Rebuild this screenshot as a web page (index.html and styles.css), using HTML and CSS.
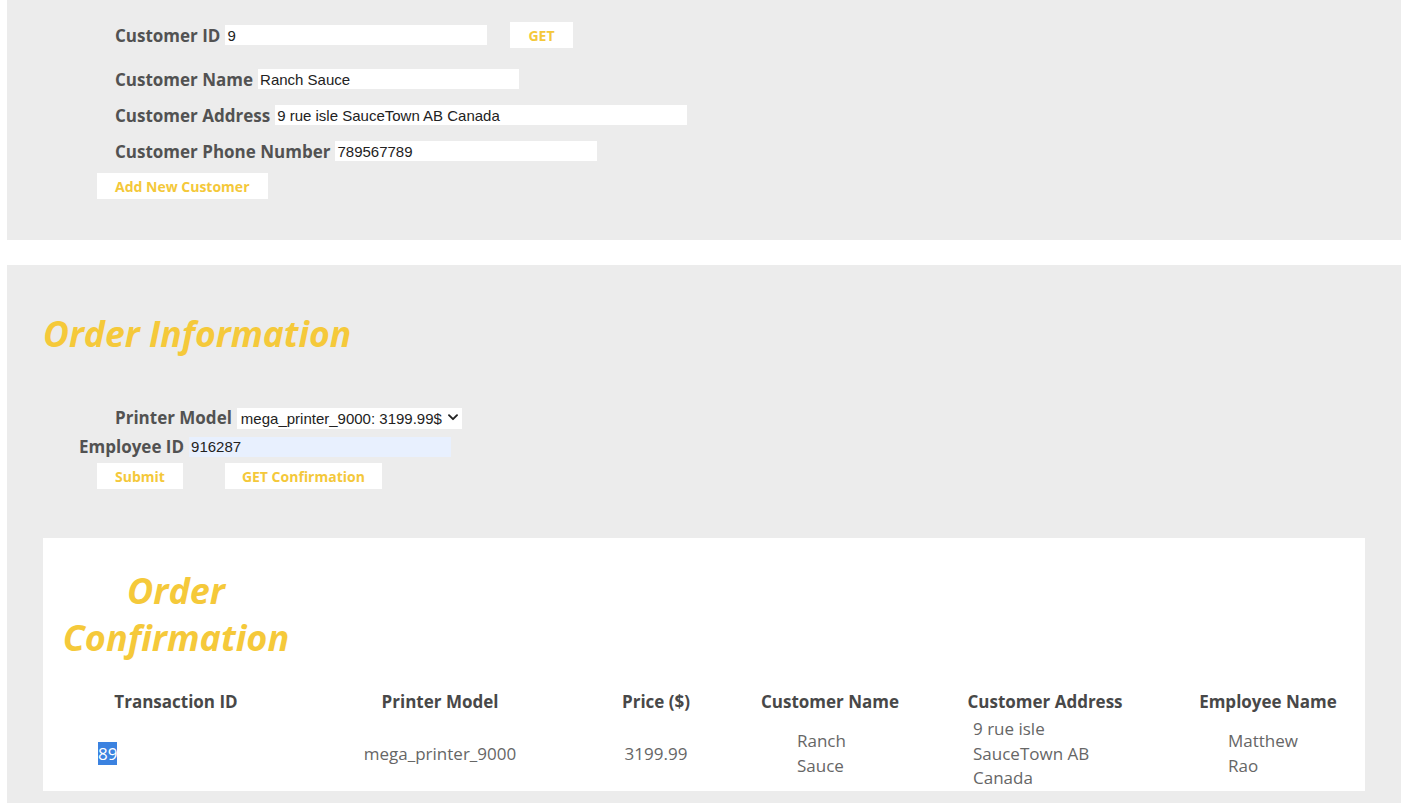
FILE: index.html
```html
<!DOCTYPE html>
<html lang="en">
<head>
<meta charset="utf-8">
<title>Printer Orders</title>
<link rel="stylesheet" href="styles.css">
</head>
<body>
<div class="page">
  <section class="panel panel-customer">
    <div class="row row-id">
      <label class="label">Customer ID</label>
      <input class="field" type="text" value="9">
      <button class="btn btn-get" type="button">GET</button>
    </div>
    <div class="row">
      <label class="label">Customer Name</label>
      <input class="field field-name" type="text" value="Ranch Sauce">
    </div>
    <div class="row">
      <label class="label">Customer Address</label>
      <input class="field field-wide" type="text" value="9 rue isle SauceTown AB Canada">
    </div>
    <div class="row">
      <label class="label">Customer Phone Number</label>
      <input class="field" type="text" value="789567789">
    </div>
    <button class="btn btn-add" type="button">Add New Customer</button>
  </section>

  <section class="panel panel-order">
    <h1 class="title">Order Information</h1>
    <div class="line line-printer">
      <label class="label">Printer Model</label>
      <span class="select-wrap">
        <select class="select">
          <option>mega_printer_9000: 3199.99$</option>
        </select>
        <svg class="chevron" width="10" height="7" viewBox="0 0 10 7" aria-hidden="true"><path d="M1 1.2 L5 5.2 L9 1.2" fill="none" stroke="#222" stroke-width="1.9" stroke-linecap="round" stroke-linejoin="round"/></svg>
      </span>
    </div>
    <div class="line line-employee">
      <label class="label">Employee ID</label>
      <input class="field field-autofill" type="text" value="916287">
    </div>
    <div class="actions">
      <button class="btn btn-submit" type="button">Submit</button>
      <button class="btn" type="button">GET Confirmation</button>
    </div>

    <div class="card">
      <h2 class="card-title">Order Confirmation</h2>
      <table class="table">
        <colgroup>
          <col class="c1"><col class="c2"><col class="c3"><col class="c4"><col class="c5"><col class="c6">
        </colgroup>
        <thead>
          <tr>
            <th>Transaction ID</th>
            <th>Printer Model</th>
            <th>Price ($)</th>
            <th>Customer Name</th>
            <th>Customer Address</th>
            <th class="th-last">Employee Name</th>
          </tr>
        </thead>
        <tbody>
          <tr>
            <td><div class="v-id"><span class="sel">89</span></div></td>
            <td class="center">mega_printer_9000</td>
            <td class="center">3199.99</td>
            <td><div class="v-name">Ranch Sauce</div></td>
            <td><div class="v-addr">9 rue isle SauceTown AB Canada</div></td>
            <td><div class="v-emp">Matthew Rao</div></td>
          </tr>
        </tbody>
      </table>
    </div>
  </section>
</div>
</body>
</html>
```

FILE: styles.css
```css
* { box-sizing: border-box; }

html, body {
  margin: 0;
  padding: 0;
  background: #ffffff;
}

body {
  font-family: "Open Sans", "Noto Sans", sans-serif;
  overflow: hidden;
}

.page {
  padding: 0 10px 0 7px;
}

.panel {
  background: #ececec;
}

.panel-customer {
  padding: 17px 0 41px 90px;
  margin-bottom: 25px;
}

.row {
  display: flex;
  align-items: center;
  gap: 5px;
  height: 36px;
  padding-left: 18px;
}

.row-id {
  margin-bottom: 8px;
}

.label {
  font-size: 17px;
  font-weight: 700;
  color: #525252;
  line-height: 23px;
  white-space: nowrap;
}

.field {
  width: 262px;
  height: 20px;
  border: 0;
  padding: 0 2px;
  margin: 0;
  background: #ffffff;
  font-family: "Liberation Sans", Arial, sans-serif;
  font-size: 15px;
  color: #222222;
  outline: none;
}

.field-name { width: 261px; }
.field-wide { width: 412px; }
.field-autofill { background: #e8f0fe; }

.btn {
  height: 26px;
  padding: 0 17px;
  border: 0;
  margin: 0;
  background: #ffffff;
  color: #f4c83a;
  font-family: "Open Sans", "Noto Sans", sans-serif;
  font-size: 14px;
  font-weight: 700;
  cursor: pointer;
}

.btn-get {
  margin-left: 18px;
  padding: 0 18px;
}

.btn-submit {
  padding: 0 18px;
}

.btn-add {
  display: block;
  margin-top: 4px;
  padding: 0 18px;
}

.panel-order {
  padding: 45px 36px 40px 36px;
}

.title {
  margin: 0;
  font-size: 35.5px;
  line-height: 46px;
  font-weight: 700;
  font-style: italic;
  color: #f5c93a;
}

.line {
  display: flex;
  align-items: center;
  gap: 5px;
  height: 23px;
}

.line-printer {
  margin-top: 50px;
  padding-left: 72px;
}

.line-employee {
  margin-top: 6px;
  padding-left: 36px;
}

.select-wrap {
  position: relative;
  display: inline-block;
  width: 225px;
  height: 21px;
}

.select {
  appearance: none;
  -webkit-appearance: none;
  width: 225px;
  height: 21px;
  border: 0;
  margin: 0;
  padding: 0 18px 0 4px;
  background: #ffffff;
  font-family: "Liberation Sans", Arial, sans-serif;
  font-size: 15px;
  color: #222222;
  outline: none;
}

.chevron {
  position: absolute;
  right: 4px;
  top: 7px;
  pointer-events: none;
}

.actions {
  display: flex;
  gap: 42px;
  margin-top: 5px;
  padding-left: 54px;
}

.card {
  margin-top: 49px;
  background: #ffffff;
  padding: 29px 0 0 21px;
}

.card-title {
  width: 236px;
  margin: 0 0 29px -6px;
  text-align: center;
  font-size: 36px;
  line-height: 47px;
  font-weight: 700;
  font-style: italic;
  color: #f5c93a;
}

.table {
  width: 1301px;
  table-layout: fixed;
  border-collapse: collapse;
  border-spacing: 0;
}

.c1 { width: 224px; }
.c2 { width: 304px; }
.c3 { width: 128px; }
.c4 { width: 220px; }
.c5 { width: 210px; }
.c6 { width: 215px; }

.table th {
  padding: 0 0 4px 0;
  font-size: 17px;
  line-height: 23px;
  font-weight: 700;
  color: #484848;
  text-align: center;
  white-space: nowrap;
}

.table .th-last {
  padding-left: 21px;
}

.table td {
  padding: 0;
  font-size: 17px;
  line-height: 24.5px;
  color: #666666;
  text-align: left;
  vertical-align: middle;
}

.table td.center {
  text-align: center;
}

.v-id { margin-left: 34px; }
.v-name { margin-left: 77px; width: 60px; }
.v-addr { margin-left: 33px; width: 130px; }
.v-emp { margin-left: 78px; width: 80px; }

.sel {
  background: #3b82e0;
  color: #ffffff;
}
```
